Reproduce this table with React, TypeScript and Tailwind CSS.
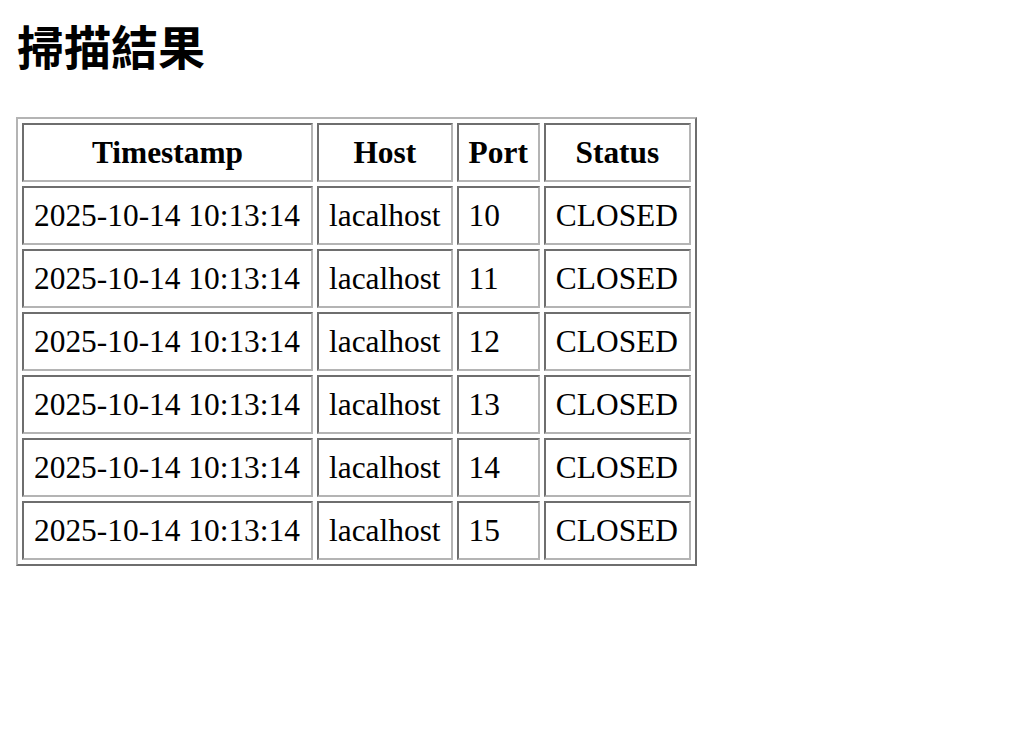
const rows = [10, 11, 12, 13, 14, 15].map((port) => ({
  timestamp: "2025-10-14 10:13:14",
  host: "lacalhost",
  port,
  status: "CLOSED",
}));

const cell =
  "h-[59px] border-2 border-t-[#6e6e6e] border-l-[#6e6e6e] border-b-[#b4b4b4] border-r-[#b4b4b4] px-[10px] py-0 align-middle whitespace-nowrap";

export default function App() {
  return (
    <main className="min-h-dvh bg-white px-[16px] text-black font-['Liberation_Serif','Times_New_Roman',serif]">
      <h1 className="pl-[1px] pt-[21px] text-[47px] leading-none font-bold font-['Noto_Sans_CJK_TC','Noto_Sans_CJK_SC',serif]">
        掃描結果
      </h1>

      <table className="mt-[49px] border-separate border-spacing-[4px] border-2 border-t-[#b4b4b4] border-l-[#b4b4b4] border-b-[#6e6e6e] border-r-[#6e6e6e] text-[31.4px] leading-none">
        <thead>
          <tr>
            <th className={`${cell} w-[291px] text-center font-bold`}>Timestamp</th>
            <th className={`${cell} w-[135px] text-center font-bold`}>Host</th>
            <th className={`${cell} w-[82px] text-center font-bold`}>Port</th>
            <th className={`${cell} w-[147px] text-center font-bold`}>Status</th>
          </tr>
        </thead>
        <tbody>
          {rows.map((r) => (
            <tr key={r.port}>
              <td className={`${cell} text-left`}>{r.timestamp}</td>
              <td className={`${cell} text-left`}>{r.host}</td>
              <td className={`${cell} text-left`}>{r.port}</td>
              <td className={`${cell} text-left`}>{r.status}</td>
            </tr>
          ))}
        </tbody>
      </table>
    </main>
  );
}
